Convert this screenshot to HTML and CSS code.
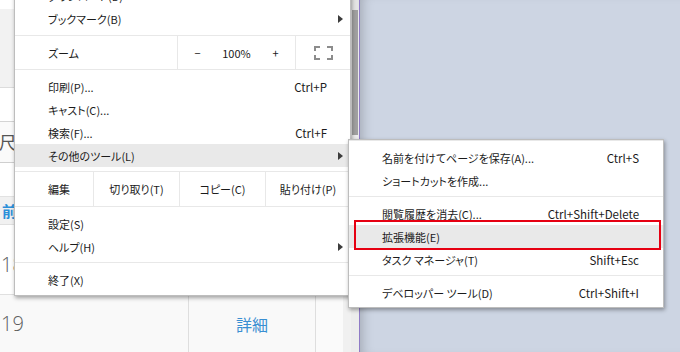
FILE: index.html
```html
<!DOCTYPE html>
<html lang="ja">
<head>
    <meta charset="UTF-8">
    <meta name="viewport" content="width=device-width, initial-scale=1.0">
    <title>その他のツール</title>
    <link rel="stylesheet" href="styles.css">
</head>
<body>
    <div class="screen">
        <div class="page">
            <div class="page-body">
                <div class="strip"></div>
                <div class="band"></div>
                <div class="gap"></div>
                <div class="field">尺し</div>
                <div class="gap gap-small"></div>
                <div class="thead">前</div>
                <div class="trow trow-a"><span class="num">18</span></div>
                <div class="trow trow-b">
                    <span class="cell cell-no num">19</span>
                    <span class="cell cell-link">詳細</span>
                    <span class="cell cell-end"></span>
                </div>
            </div>
            <div class="scrollbar">
                <div class="scroll-top"></div>
                <div class="thumb"></div>
            </div>
        </div>
        <div class="edge"></div>
        <div class="desk"></div>
    </div>

    <!-- Chrome のメニュー -->
    <div class="menu">
        <div class="group group-first">
            <div class="item"><span>ダウンロード(D)</span></div>
            <div class="item sub"><span>ブックマーク(B)</span><i class="arrow"></i></div>
        </div>
        <div class="split zoom">
            <span class="cell-label">ズーム</span>
            <div class="zoom-ctrl">
                <span>−</span>
                <span>100%</span>
                <span>+</span>
            </div>
            <div class="full">
                <svg width="19" height="14" viewBox="0 0 19 14">
                    <path d="M1 5V1H6M13 1H18V5M18 9V13H13M6 13H1V9" fill="none" stroke="#8c8c8c" stroke-width="2"/>
                </svg>
            </div>
        </div>
        <div class="group">
            <div class="item"><span>印刷(P)...</span><span class="key">Ctrl+P</span></div>
            <div class="item"><span>キャスト(C)...</span></div>
            <div class="item"><span>検索(F)...</span><span class="key">Ctrl+F</span></div>
            <div class="item sub current"><span>その他のツール(L)</span><i class="arrow"></i></div>
        </div>
        <div class="split edit">
            <span class="cell-label">編集</span>
            <span class="cell-btn">切り取り(T)</span>
            <span class="cell-btn">コピー(C)</span>
            <span class="cell-btn">貼り付け(P)</span>
        </div>
        <div class="group">
            <div class="item"><span>設定(S)</span></div>
            <div class="item sub"><span>ヘルプ(H)</span><i class="arrow"></i></div>
        </div>
        <div class="group">
            <div class="item"><span>終了(X)</span></div>
        </div>
    </div>

    <div class="submenu">
        <div class="group">
            <div class="item"><span>名前を付けてページを保存(A)...</span><span class="key">Ctrl+S</span></div>
            <div class="item"><span>ショートカットを作成...</span></div>
        </div>
        <div class="group">
            <div class="item"><span>閲覧履歴を消去(C)...</span><span class="key">Ctrl+Shift+Delete</span></div>
            <div class="item current"><span>拡張機能(E)</span></div>
            <div class="item"><span>タスク マネージャ(T)</span><span class="key">Shift+Esc</span></div>
        </div>
        <div class="group group-last">
            <div class="item"><span>デベロッパー ツール(D)</span><span class="key">Ctrl+Shift+I</span></div>
        </div>
    </div>

    <div class="mark"></div>
</body>
</html>
```

FILE: styles.css
```css
body {
    margin: 0;
    width: 680px;
    height: 352px;
    overflow: hidden;
    position: relative;
    font-family: "Noto Sans CJK JP", "Noto Sans", sans-serif;
    font-feature-settings: "palt";
    font-size: 11px;
    color: #1b1b1b;
}

/* 背景のページ */
.screen {
    display: flex;
    height: 352px;
}

.page {
    display: flex;
    width: 359px;
    background: #f0f0f0;
}

.page-body {
    width: 351px;
    display: flex;
    flex-direction: column;
}

.strip {
    height: 9px;
    background: #fff;
}

.band {
    height: 78px;
    background: #f2f2f2;
    border-bottom: 1px solid #dcdcdc;
}

.gap {
    height: 33px;
    background: #fff;
    border-bottom: 1px solid #d4d4d4;
}

.gap-small {
    height: 33px;
    border-bottom: 1px solid #e2e2e2;
}

.field {
    height: 40px;
    line-height: 40px;
    background: #fafafa;
    border-bottom: 1px solid #cfcfcf;
    font-size: 17px;
    color: #555;
    text-indent: -1px;
}

.thead {
    height: 27px;
    line-height: 27px;
    background: #f1f1f1;
    border-bottom: 1px solid #e0e0e0;
    color: #2b8fd9;
    font-weight: bold;
    font-size: 15px;
    padding-left: 2px;
}

.trow {
    display: flex;
    width: 343px;
}

.trow-a {
    height: 69px;
    background: #fff;
    border-bottom: 1px solid #e0e0e0;
    align-items: flex-end;
}

.trow-a .num {
    line-height: 58px;
}

.trow-b {
    flex: 1;
    background: #f9f9f9;
    align-items: stretch;
}

.num {
    font-family: "Open Sans", sans-serif;
    font-weight: 300;
    font-size: 20px;
    color: #5e5e5e;
    padding-left: 1px;
}

.cell {
    display: flex;
    align-items: center;
}

.cell-no {
    width: 187px;
}

.cell-link {
    width: 126px;
    justify-content: center;
    border-left: 1px solid #dedede;
    border-right: 1px solid #dedede;
    color: #3a8fd2;
    font-size: 16px;
}

.cell-end {
    flex: 1;
    background: #fafafa;
}

.scrollbar {
    width: 8px;
    background: #ececec;
}

.scroll-top {
    height: 10px;
    background: #e4e4e4;
}

.thumb {
    height: 125px;
    margin-left: 1px;
    width: 6px;
    background: #a0a0a0;
}

.edge {
    width: 1px;
    background: #8f7bc6;
}

.desk {
    flex: 1;
    background: #cdd5e3;
    box-shadow: inset 10px 0 12px -8px rgba(0, 0, 0, 0.22);
}

/* メニュー */
.menu,
.submenu {
    position: absolute;
    background: #fff;
    border: 1px solid #bdbdbd;
    box-sizing: border-box;
    box-shadow: 1px 2px 4px rgba(0, 0, 0, 0.35);
}

.menu {
    left: 14px;
    top: -22px;
    width: 337px;
}

.submenu {
    left: 348px;
    top: 139px;
    width: 316px;
}

.group {
    padding: 5px 0 4px;
    border-top: 1px solid #e8e8e8;
}

.group-first {
    border-top: 0;
    padding-bottom: 5px;
}

.group-last {
    padding-bottom: 3px;
}

.item {
    height: 23px;
    display: flex;
    align-items: center;
    justify-content: space-between;
    padding: 0 23px 0 33px;
    white-space: nowrap;
}

.key {
    font-size: 11.5px;
}

.submenu .item {
    padding-right: 24px;
}

.item.sub {
    padding-right: 7px;
}

.item.current {
    background: #e9e9e9;
}

.arrow {
    width: 0;
    height: 0;
    border-top: 4px solid transparent;
    border-bottom: 4px solid transparent;
    border-left: 5px solid #3c3c3c;
}

.split {
    display: grid;
    border-top: 1px solid #e8e8e8;
    align-items: stretch;
}

.split > * {
    display: flex;
    align-items: center;
}

.zoom {
    height: 33px;
    grid-template-columns: 162px 118px 1fr;
}

.edit {
    height: 34px;
    grid-template-columns: 78px 86px 86px 1fr;
}

.cell-label {
    padding-left: 33px;
}

.zoom-ctrl {
    display: grid;
    grid-template-columns: repeat(3, 1fr);
    border-left: 1px solid #e8e8e8;
}

.zoom-ctrl span {
    text-align: center;
}

.full {
    justify-content: center;
    border-left: 1px solid #e8e8e8;
}

.cell-btn {
    justify-content: center;
    border-left: 1px solid #e8e8e8;
    white-space: nowrap;
}

/* 赤い枠 */
.mark {
    position: absolute;
    left: 354px;
    top: 220px;
    width: 307px;
    height: 30px;
    box-sizing: border-box;
    border: 2px solid #e60012;
}
```
